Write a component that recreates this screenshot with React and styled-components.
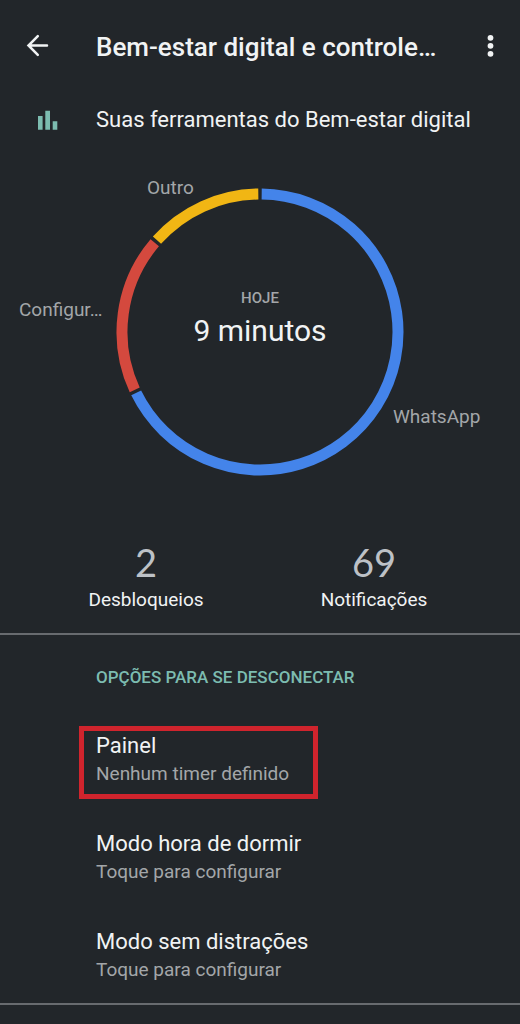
import React from "react";
import styled, { createGlobalStyle } from "styled-components";

const colors = {
  background: "#22262a",
  text: "#f1f3f4",
  muted: "#a3a6a9",
  accent: "#7cbcb0",
  divider: "#686b6f",
  highlight: "#d0242d",
};

const GlobalStyle = createGlobalStyle`
  * { box-sizing: border-box; }
  body {
    margin: 0;
    background: ${colors.background};
    color: ${colors.text};
    font-family: Roboto, "Liberation Sans", sans-serif;
  }
`;

const Page = styled.div`
  display: flex;
  flex-direction: column;
  min-height: 100vh;
`;

const Header = styled.header`
  display: flex;
  align-items: center;
  height: 92px;
  padding: 0 14px 0 22px;
`;

const IconButton = styled.button`
  display: flex;
  flex: none;
  align-items: center;
  justify-content: center;
  width: 32px;
  height: 32px;
  padding: 0;
  border: 0;
  background: none;
  color: inherit;
`;

const Title = styled.h1`
  flex: 1;
  margin: 0 0 0 42px;
  padding-top: 2px;
  font-size: 26px;
  font-weight: 500;
  line-height: 32px;
  white-space: nowrap;
`;

const ToolsRow = styled.div`
  display: flex;
  align-items: center;
  height: 56px;
  padding-left: 36px;
`;

const ToolsLabel = styled.h2`
  margin: 0 0 0 36px;
  font-size: 22px;
  font-weight: 400;
  line-height: 28px;
`;

const Usage = styled.section`
  display: flex;
  justify-content: center;
  padding: 40px 0 62px;
`;

const Chart = styled.div`
  position: relative;
  display: grid;
  place-items: center;
  width: 288px;
  height: 288px;

  > * {
    grid-area: 1 / 1;
  }
`;

const Ring = styled.svg`
  display: block;
  width: 288px;
  height: 288px;
`;

const Total = styled.div`
  display: flex;
  flex-direction: column;
  align-items: center;
  padding-bottom: 22px;
`;

const Period = styled.span`
  color: ${colors.muted};
  font-size: 15px;
  font-weight: 500;
  line-height: 20px;
`;

const Duration = styled.span`
  font-size: 30px;
  line-height: 46px;
`;

const SliceLabel = styled.span`
  position: absolute;
  top: ${(p) => p.$top}px;
  left: ${(p) => p.$left}px;
  color: ${colors.muted};
  font-size: 19px;
  line-height: 24px;
`;

const Stats = styled.dl`
  display: flex;
  justify-content: center;
  margin: 0;
  padding-bottom: 19px;
`;

const Stat = styled.div`
  display: flex;
  flex-direction: column-reverse;
  align-items: center;
  width: 228px;
`;

const StatValue = styled.dd`
  margin: 0;
  color: #bdc1c6;
  font-family: Lato, Roboto, sans-serif;
  font-size: 38px;
  line-height: 48px;
`;

const StatLabel = styled.dt`
  font-size: 19px;
  line-height: 28px;
`;

const Divider = styled.hr`
  width: 100%;
  height: 2px;
  margin: 0;
  border: 0;
  background: ${colors.divider};
`;

const Options = styled.section`
  display: flex;
  flex-direction: column;
  align-items: flex-start;
  gap: 25px;
  padding: 30px 0 8px 79px;
`;

const SectionTitle = styled.h2`
  margin: 0 0 12px 17px;
  color: ${colors.accent};
  font-size: 17px;
  font-weight: 500;
  line-height: 24px;
`;

const Option = styled.button`
  display: flex;
  flex-direction: column;
  align-items: flex-start;
  padding: 1px 24px 6px 12px;
  border: 5px solid ${(p) => (p.$highlighted ? colors.highlight : "transparent")};
  background: none;
  color: inherit;
  font-family: inherit;
  text-align: left;
`;

const OptionTitle = styled.span`
  font-size: 22px;
  line-height: 28px;
`;

const OptionSummary = styled.span`
  color: ${colors.muted};
  font-size: 19px;
  line-height: 28px;
`;

const CENTER = 144;
const RADIUS = 138;

const slices = [
  { name: "WhatsApp", color: "#4484ea", from: 0, to: 244.5, top: 217, left: 277 },
  { name: "Configur…", color: "#d4493e", from: 244.5, to: 311, top: 110, left: -97 },
  { name: "Outro", color: "#f1b614", from: 311, to: 360, top: -12, left: 31 },
];

const options = [
  { title: "Painel", summary: "Nenhum timer definido", highlighted: true },
  { title: "Modo hora de dormir", summary: "Toque para configurar" },
  { title: "Modo sem distrações", summary: "Toque para configurar" },
];

const pointAt = (degrees) => {
  const a = (degrees * Math.PI) / 180;
  return `${CENTER + RADIUS * Math.sin(a)} ${CENTER - RADIUS * Math.cos(a)}`;
};

const arc = (from, to) => {
  const gap = 0.7;
  const large = to - from > 180 ? 1 : 0;
  return `M${pointAt(from + gap)} A${RADIUS} ${RADIUS} 0 ${large} 1 ${pointAt(to - gap)}`;
};

export default function App() {
  return (
    <Page>
      <GlobalStyle />
      <Header>
        <IconButton aria-label="Voltar">
          <svg
            width="24"
            height="24"
            viewBox="0 0 24 24"
            fill="none"
            stroke="currentColor"
            strokeWidth="2.5"
            strokeLinecap="round"
          >
            <path d="M21 11.5H2.5M11.8 2.2 2.5 11.5l9.3 9.3" />
          </svg>
        </IconButton>
        <Title>Bem-estar digital e controle…</Title>
        <IconButton aria-label="Mais opções">
          <svg width="8" height="24" viewBox="0 0 8 24" fill="currentColor">
            <circle cx="4.5" cy="3.8" r="2.9" />
            <circle cx="4.5" cy="11.8" r="2.9" />
            <circle cx="4.5" cy="19.8" r="2.9" />
          </svg>
        </IconButton>
      </Header>

      <main>
        <ToolsRow>
          <svg width="24" height="20" viewBox="0 0 24 20" fill={colors.accent} aria-hidden="true">
            <path d="M2 6h4.6v13.7H2zM9.3.7h4.7v19H9.3zM16.7 11.3h4.6v8.4h-4.6z" />
          </svg>
          <ToolsLabel>Suas ferramentas do Bem-estar digital</ToolsLabel>
        </ToolsRow>

        <Usage>
          <Chart>
            <Ring viewBox="0 0 288 288" fill="none" strokeWidth="11" aria-hidden="true">
              {slices.map((s) => (
                <path key={s.name} d={arc(s.from, s.to)} stroke={s.color} />
              ))}
            </Ring>
            <Total>
              <Period>HOJE</Period>
              <Duration>9 minutos</Duration>
            </Total>
            {slices.map((s) => (
              <SliceLabel key={s.name} $top={s.top} $left={s.left}>
                {s.name}
              </SliceLabel>
            ))}
          </Chart>
        </Usage>

        <Stats>
          <Stat>
            <StatLabel>Desbloqueios</StatLabel>
            <StatValue>2</StatValue>
          </Stat>
          <Stat>
            <StatLabel>Notificações</StatLabel>
            <StatValue>69</StatValue>
          </Stat>
        </Stats>
        <Divider />

        <Options>
          <SectionTitle>OPÇÕES PARA SE DESCONECTAR</SectionTitle>
          {options.map((o) => (
            <Option key={o.title} $highlighted={o.highlighted}>
              <OptionTitle>{o.title}</OptionTitle>
              <OptionSummary>{o.summary}</OptionSummary>
            </Option>
          ))}
        </Options>
        <Divider />
      </main>
    </Page>
  );
}
